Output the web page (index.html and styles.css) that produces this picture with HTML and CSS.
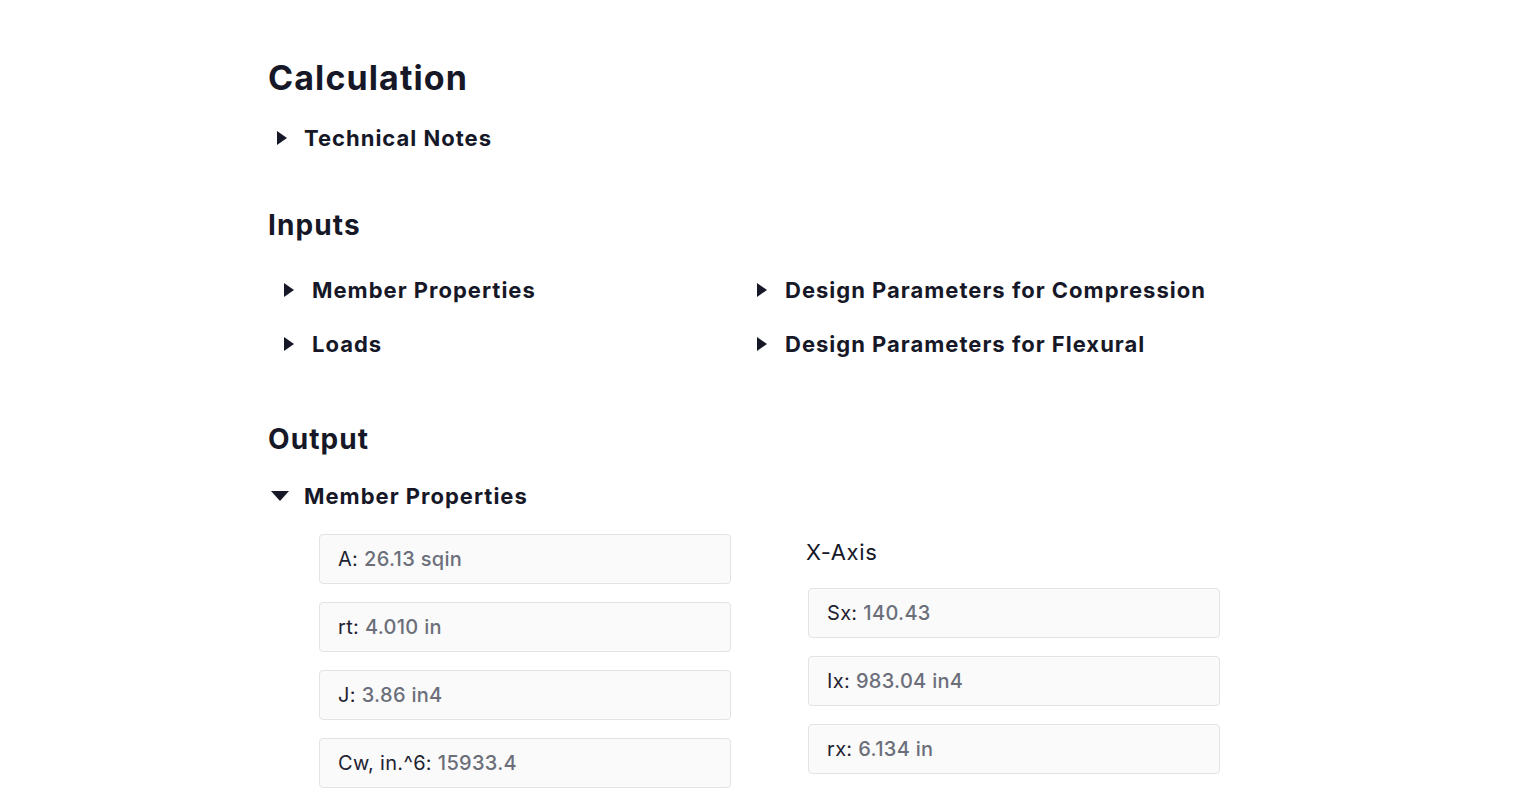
FILE: index.html
```html
<!DOCTYPE html>
<html>
<head>
<meta charset="utf-8">
<link rel="stylesheet" href="styles.css">
</head>
<body>
<main class="page">
  <h1 class="title">Calculation</h1>
  <div class="toggle toggle-notes">
    <span class="tri tri-right"></span>
    <span class="toggle-label">Technical Notes</span>
  </div>

  <h2 class="section section-inputs">Inputs</h2>
  <div class="inputs-grid">
    <div class="toggle"><span class="tri tri-right"></span><span class="toggle-label">Member Properties</span></div>
    <div class="toggle"><span class="tri tri-right"></span><span class="toggle-label">Design Parameters for Compression</span></div>
    <div class="toggle"><span class="tri tri-right"></span><span class="toggle-label">Loads</span></div>
    <div class="toggle"><span class="tri tri-right"></span><span class="toggle-label">Design Parameters for Flexural</span></div>
  </div>

  <h2 class="section section-output">Output</h2>
  <div class="toggle toggle-open">
    <span class="tri tri-down"></span>
    <span class="toggle-label">Member Properties</span>
  </div>

  <div class="props">
    <div class="col col-left">
      <div class="field"><span class="lbl">A:</span> <span class="val">26.13 sqin</span></div>
      <div class="field"><span class="lbl">rt:</span> <span class="val">4.010 in</span></div>
      <div class="field"><span class="lbl">J:</span> <span class="val">3.86 in4</span></div>
      <div class="field"><span class="lbl">Cw, in.^6:</span> <span class="val">15933.4</span></div>
    </div>
    <div class="col col-right">
      <div class="axis">X-Axis</div>
      <div class="field"><span class="lbl">Sx:</span> <span class="val">140.43</span></div>
      <div class="field"><span class="lbl">Ix:</span> <span class="val">983.04 in4</span></div>
      <div class="field"><span class="lbl">rx:</span> <span class="val">6.134 in</span></div>
    </div>
  </div>
</main>
</body>
</html>
```

FILE: styles.css
```css
html, body {
  margin: 0;
  padding: 0;
  background: #ffffff;
}

body {
  font-family: Inter, "Liberation Sans", sans-serif;
  color: #161827;
}

.page {
  padding: 58px 0 0 268px;
  width: 964px;
}

.title {
  margin: 0;
  font-size: 34px;
  line-height: 40px;
  font-weight: 700;
  color: #161827;
  letter-spacing: 1.1px;
}

.section {
  margin: 0;
  font-size: 28px;
  line-height: 34px;
  font-weight: 700;
  color: #161827;
  letter-spacing: 1.1px;
}

.section-inputs { margin-top: 55px; }
.section-output { margin-top: 63px; }

.toggle {
  display: flex;
  align-items: center;
  height: 30px;
}

.toggle-notes {
  margin-top: 25px;
  padding-left: 9px;
}

.toggle-notes .tri-right {
  margin-right: 17px;
}

.toggle-label {
  font-size: 22px;
  font-weight: 700;
  line-height: 30px;
  color: #161827;
  letter-spacing: 1.0px;
}

.tri {
  display: inline-block;
  width: 0;
  height: 0;
}

.tri-right {
  border-top: 7.5px solid transparent;
  border-bottom: 7.5px solid transparent;
  border-left: 10px solid #161827;
  margin-right: 18px;
}

.tri-down {
  border-left: 9px solid transparent;
  border-right: 9px solid transparent;
  border-top: 10px solid #161827;
  margin-left: 3px;
  margin-right: 15px;
}

.inputs-grid {
  margin-top: 33px;
  display: grid;
  grid-template-columns: 473px 473px;
  row-gap: 24px;
  padding-left: 16px;
}

.toggle-open {
  margin-top: 25px;
}

.props {
  display: flex;
  margin-top: 23px;
  padding-left: 51px;
  gap: 77px;
}

.col {
  display: flex;
  flex-direction: column;
  gap: 18px;
}

.col-right {
  gap: 0;
}

.col-right .field + .field {
  margin-top: 18px;
}

.axis {
  font-size: 22px;
  line-height: 28px;
  color: #161827;
  letter-spacing: 0.6px;
  margin-top: 4px;
  margin-left: -2px;
  margin-bottom: 22px;
}

.field {
  box-sizing: border-box;
  width: 412px;
  height: 50px;
  background: #fafafa;
  border: 1px solid #e3e3e6;
  border-radius: 4px;
  padding: 0 18px;
  line-height: 48px;
  font-size: 20px;
  letter-spacing: 0.3px;
  white-space: nowrap;
}

.lbl {
  color: #1f2230;
}

.val {
  color: #6c6f7a;
  font-weight: 500;
}
```
